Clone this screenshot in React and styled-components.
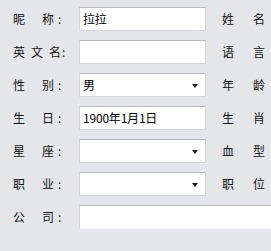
import React from 'react';
import styled, { createGlobalStyle } from 'styled-components';

const GlobalStyle = createGlobalStyle`
  html, body {
    margin: 0;
    padding: 0;
    background: #e5e6ea;
    overflow: hidden;
  }
  body {
    font-family: "Noto Sans CJK SC", "Liberation Sans", sans-serif;
  }
`;

const rows = [
    [
        { label: ['昵', '称'], type: 'text', value: '拉拉' },
        { label: ['姓', '名'], type: 'text', value: '' },
    ],
    [
        { label: ['英', '文', '名'], type: 'text', value: '' },
        { label: ['语', '言'], type: 'text', value: '' },
    ],
    [
        { label: ['性', '别'], type: 'select', value: '男' },
        { label: ['年', '龄'], type: 'text', value: '' },
    ],
    [
        { label: ['生', '日'], type: 'text', value: '1900年1月1日' },
        { label: ['生', '肖'], type: 'text', value: '' },
    ],
    [
        { label: ['星', '座'], type: 'select', value: '' },
        { label: ['血', '型'], type: 'text', value: '' },
    ],
    [
        { label: ['职', '业'], type: 'select', value: '' },
        { label: ['职', '位'], type: 'text', value: '' },
    ],
];

function FieldLabel({ chars, right }) {
    const gap = chars.length > 2 ? 6 : right ? 19 : 17;
    return (
        <Label $gap={gap}>
            {chars.map((c, i) => <Char key={i}>{c}</Char>)}
            <Colon $wide={chars.length > 2}>:</Colon>
        </Label>
    );
}

function Control({ type, value }) {
    if (type === 'select') {
        return (
            <Box>
                <BoxText>{value}</BoxText>
                <Arrow />
            </Box>
        );
    }
    return (
        <Box>
            <BoxText>{value}</BoxText>
        </Box>
    );
}

export default function App() {
    return (
        <>
            <GlobalStyle />
            <Form>
                {rows.map((row, i) => (
                    <Row key={i}>
                        {row.map((f, j) => (
                            <Field key={j} $right={j === 1}>
                                <FieldLabel chars={f.label} right={j === 1} />
                                <Control type={f.type} value={f.value} />
                            </Field>
                        ))}
                    </Row>
                ))}
                <Row>
                    <Field>
                        <FieldLabel chars={['公', '司']} />
                    </Field>
                    <TextArea />
                </Row>
            </Form>
        </>
    );
}

const Form = styled.div`
  display: flex;
  flex-direction: column;
  gap: 9px;
  padding: 7px 0 0 13px;
  width: 400px;
`;

const Row = styled.div`
  display: flex;
  align-items: flex-start;
  height: 24px;
`;

const Field = styled.div`
  display: flex;
  align-items: center;
  height: 24px;
  margin-left: ${p => (p.$right ? '16px' : '0')};
`;

const Label = styled.div`
  display: flex;
  align-items: center;
  gap: ${p => p.$gap}px;
  width: 66px;
  flex-shrink: 0;
  font-size: 12px;
  line-height: 12px;
  color: #111;
`;

const Char = styled.span`
  width: 12px;
`;

const Colon = styled.span`
  margin-left: ${p => (p.$wide ? '-5px' : '-13px')};
  color: #222;
`;

const Box = styled.div`
  position: relative;
  display: flex;
  align-items: center;
  box-sizing: border-box;
  width: 127px;
  height: 24px;
  background: #fff;
  border: 1px solid #d6d6da;
  border-top-color: #b9b9bd;
  padding: 0 3px;
`;

const BoxText = styled.span`
  font-size: 12px;
  line-height: 14px;
  letter-spacing: -0.2px;
  color: #000;
`;

const Arrow = styled.span`
  position: absolute;
  right: 7px;
  top: 10px;
  width: 0;
  height: 0;
  border-left: 3.5px solid transparent;
  border-right: 3.5px solid transparent;
  border-top: 4px solid #222;
`;

const TextArea = styled.div`
  box-sizing: border-box;
  width: 300px;
  height: 80px;
  background: #fff;
  border: 1px solid #d6d6da;
  border-top-color: #b9b9bd;
`;
